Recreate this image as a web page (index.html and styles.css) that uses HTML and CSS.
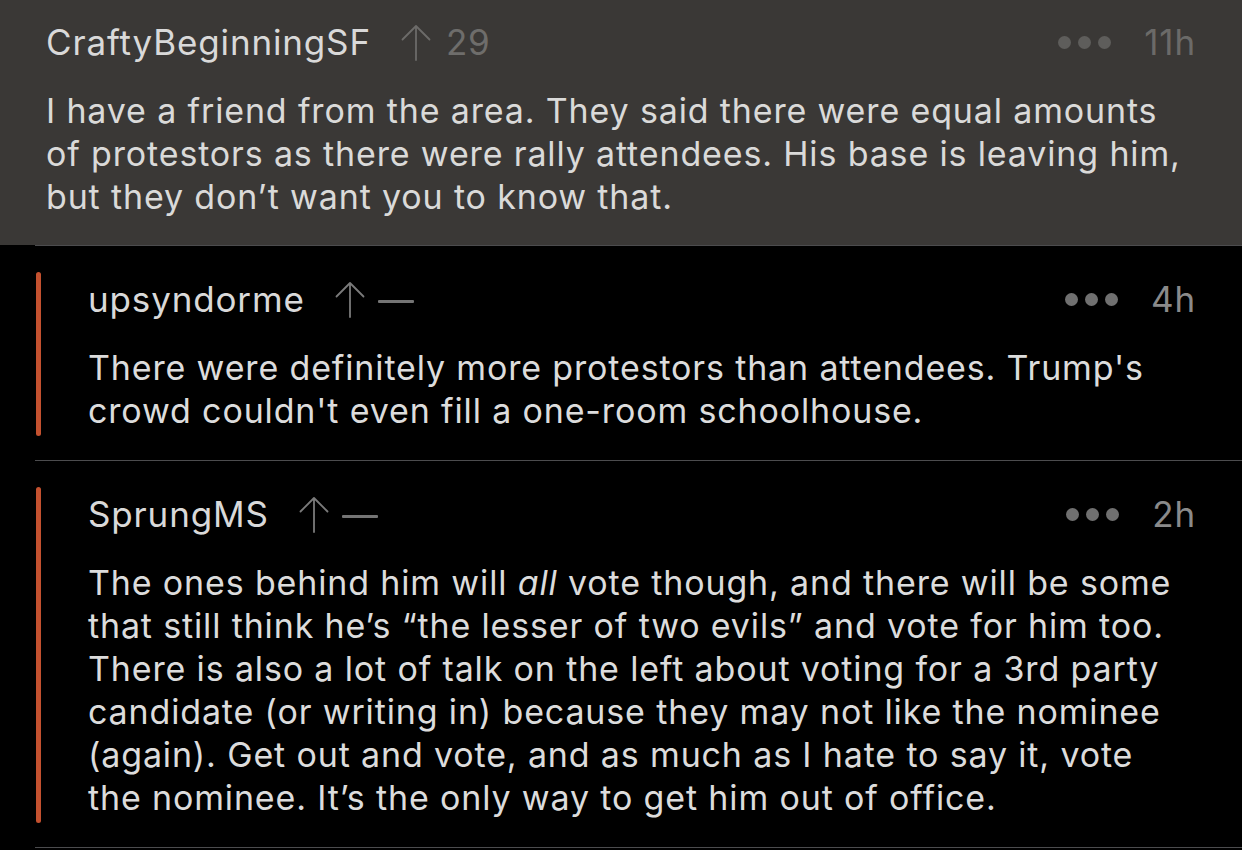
FILE: index.html
```html
<!DOCTYPE html>
<html lang="en">
<head>
<meta charset="utf-8">
<title>Comments</title>
<link rel="stylesheet" href="styles.css">
</head>
<body>
<main class="thread">
  <article class="comment comment--parent">
    <header class="meta">
      <span class="author">CraftyBeginningSF</span>
      <svg class="upvote" viewBox="0 0 30 36" aria-hidden="true"><path d="M15 35.5V1.5M1.5 15L15 1.5L28.5 15"/></svg>
      <span class="score">29</span>
      <span class="spacer"></span>
      <span class="more" aria-label="More"><i></i><i></i><i></i></span>
      <span class="age">11h</span>
    </header>
    <p class="body">I have a friend from the area. They said there were equal amounts<br>of protestors as there were rally attendees. His base is leaving him,<br>but they don’t want you to know that.</p>
  </article>

  <article class="reply">
    <div class="rail"></div>
    <div class="reply__content">
      <header class="meta">
        <span class="author">upsyndorme</span>
        <svg class="upvote" viewBox="0 0 30 36" aria-hidden="true"><path d="M15 35.5V1.5M1.5 15L15 1.5L28.5 15"/></svg>
        <span class="dash"></span>
        <span class="spacer"></span>
        <span class="more" aria-label="More"><i></i><i></i><i></i></span>
        <span class="age">4h</span>
      </header>
      <p class="body">There were definitely more protestors than attendees. Trump's<br>crowd couldn't even fill a one-room schoolhouse.</p>
    </div>
  </article>

  <article class="reply">
    <div class="rail"></div>
    <div class="reply__content">
      <header class="meta">
        <span class="author">SprungMS</span>
        <svg class="upvote" viewBox="0 0 30 36" aria-hidden="true"><path d="M15 35.5V1.5M1.5 15L15 1.5L28.5 15"/></svg>
        <span class="dash"></span>
        <span class="spacer"></span>
        <span class="more" aria-label="More"><i></i><i></i><i></i></span>
        <span class="age">2h</span>
      </header>
      <p class="body">The ones behind him will <em>all</em> vote though, and there will be some<br>that still think he’s “the lesser of two evils” and vote for him too.<br>There is also a lot of talk on the left about voting for a 3rd party<br>candidate (or writing in) because they may not like the nominee<br>(again). Get out and vote, and as much as I hate to say it, vote<br>the nominee. It’s the only way to get him out of office.</p>
    </div>
  </article>
</main>
</body>
</html>
```
FILE: styles.css
```css
* { box-sizing: border-box; }

html, body {
  margin: 0;
  padding: 0;
  background: #000;
}

body {
  font-family: "Inter", "Roboto", sans-serif;
  color: #dcdcdc;
  width: 1242px;
  height: 850px;
  overflow: hidden;
}

.thread {
  display: flex;
  flex-direction: column;
}

.comment--parent {
  background: #3a3836;
  padding: 21px 46px 27px 46px;
}

.meta {
  display: flex;
  align-items: center;
  height: 43px;
  font-size: 35px;
  line-height: 43px;
  letter-spacing: 0.85px;
}

.author {
  color: #d9d9d9;
  white-space: nowrap;
}

.upvote {
  width: 30px;
  height: 37px;
  margin-left: 30px;
  flex: none;
  fill: none;
  stroke: #7a7a7a;
  stroke-width: 1.8;
  stroke-linecap: round;
  stroke-linejoin: round;
}

.comment--parent .upvote { stroke: #6c6b69; }

.score {
  margin-left: 15px;
  color: #6e6d6b;
}

.dash {
  width: 36px;
  height: 2.5px;
  margin-left: 13px;
  margin-top: 4px;
  background: #747474;
  border-radius: 1px;
}

.spacer { flex: 1; }

.more {
  display: flex;
  gap: 7px;
  margin-right: 33px;
}

.more i {
  width: 13px;
  height: 13px;
  border-radius: 50%;
  background: #707070;
}

.comment--parent .more i { background: #5e5d5b; }

.age {
  color: #8a8a8a;
}

.comment--parent .age { color: #6b6a68; }

.body {
  margin: 25px 0 0;
  font-size: 34px;
  line-height: 43px;
  letter-spacing: 0.85px;
  white-space: nowrap;
}

.comment--parent .body { color: #dadad9; }

.body em { font-style: italic; }

.reply {
  display: flex;
  margin-left: 35px;
  padding: 26px 46px 24px 1px;
  border-top: 1px solid #4c4c4e;
}

.reply:last-child {
  border-bottom: 1px solid #4c4c4e;
}

.rail {
  flex: none;
  width: 5px;
  border-radius: 3px;
  background: #c4512f;
}

.reply__content {
  flex: 1;
  padding: 6px 0 4px 47px;
}

.reply .body {
  margin-top: 25px;
}
```
